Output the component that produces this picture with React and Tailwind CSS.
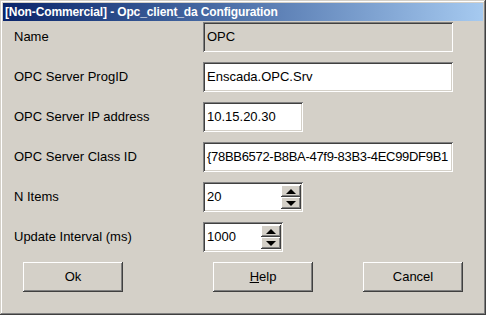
import React from 'react'

const RAISED = 'shadow-[inset_-1px_-1px_#404040,inset_1px_1px_#ffffff,inset_-2px_-2px_#808080,inset_2px_2px_#d4d0c8]'
const SUNKEN = 'shadow-[inset_1px_1px_#808080,inset_-1px_-1px_#ffffff,inset_2px_2px_#404040,inset_-2px_-2px_#d4d0c8]'

const Spin = () => (
    <div className="flex h-full w-[20px] flex-col py-[1px]">
        <div className={`flex flex-1 items-center justify-center bg-[#d4d0c8] ${RAISED}`}>
            <svg width="10" height="5" viewBox="0 0 10 5"><path d="M5 0 L10 5 L0 5 Z" fill="#000" /></svg>
        </div>
        <div className={`flex flex-1 items-center justify-center bg-[#d4d0c8] ${RAISED}`}>
            <svg width="10" height="5" viewBox="0 0 10 5"><path d="M0 0 L10 0 L5 5 Z" fill="#000" /></svg>
        </div>
    </div>
)

const Field = ({ value, width, readOnly, spin, tight }) => (
    <div className={`flex h-[30px] items-center overflow-hidden p-[2px] ${SUNKEN} ${readOnly ? 'bg-[#d4d0c8]' : 'bg-white'} ${width}`}>
        <span className={`flex-1 overflow-hidden whitespace-nowrap pl-[2px] text-[13px] text-black ${tight ? 'tracking-[-0.3px]' : ''}`}>{value}</span>
        {spin && <Spin />}
    </div>
)

const Button = ({ children, className }) => (
    <button className={`flex h-[30px] w-[100px] items-center justify-center bg-[#d4d0c8] text-[13px] text-black ${RAISED} ${className}`}>
        {children}
    </button>
)

const ROWS = [
    { label: 'Name', value: 'OPC', width: 'w-[250px]', readOnly: true },
    { label: 'OPC Server ProgID', value: 'Enscada.OPC.Srv', width: 'w-[250px]' },
    { label: 'OPC Server IP address', value: '10.15.20.30', width: 'w-[100px]' },
    { label: 'OPC Server Class ID', value: '{78BB6572-B8BA-47f9-83B3-4EC99DF9B1', width: 'w-[250px]', tight: true },
    { label: 'N Items', value: '20', width: 'w-[100px]', spin: true },
    { label: 'Update Interval (ms)', value: '1000', width: 'w-[80px]', spin: true },
]

export default function App() {
    return (
        <div className="h-[315px] w-[486px] bg-[#d4d0c8] p-[3px] font-['Liberation_Sans',Arial,sans-serif] shadow-[inset_-1px_-1px_#404040,inset_1px_1px_#d4d0c8,inset_-2px_-2px_#808080,inset_2px_2px_#ffffff]">
            {/* Title bar */}
            <div className="flex h-[18px] items-center bg-gradient-to-r from-[#0a246a] to-[#a6caf0] pl-[2px] text-[12px] font-bold tracking-[-0.13px] text-white">
                [Non-Commercial] - Opc_client_da Configuration
            </div>

            {/* Fields */}
            <div className="mt-[1px] grid grid-cols-[200px_1fr] gap-y-[10px]">
                {ROWS.map((r) => (
                    <React.Fragment key={r.label}>
                        <div className="flex h-[30px] items-center pl-[11px] text-[13px] text-black">{r.label}</div>
                        <Field value={r.value} width={r.width} readOnly={r.readOnly} spin={r.spin} tight={r.tight} />
                    </React.Fragment>
                ))}
            </div>

            {/* Buttons */}
            <div className="mt-[10px] flex">
                <Button className="ml-[20px]">Ok</Button>
                <Button className="ml-[90px]"><span><span className="underline">H</span>elp</span></Button>
                <Button className="ml-[50px]">Cancel</Button>
            </div>
        </div>
    )
}
